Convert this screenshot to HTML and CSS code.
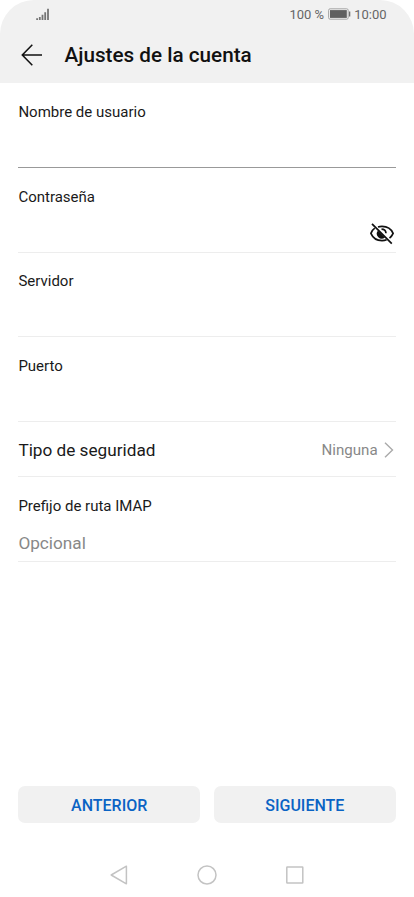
FILE: index.html
```html
<!DOCTYPE html>
<html lang="es">
<head>
<meta charset="utf-8">
<title>Ajustes de la cuenta</title>
<link rel="stylesheet" href="styles.css">
</head>
<body>
<div class="screen">
  <header class="header">
    <div class="status">
      <svg class="signal" width="14" height="14" viewBox="0 0 14 14" fill="#747474"><path d="M.2 10.300h1.800V12H.2zM2.900 8.900h1.800V12H2.900zM5.600 6.700h1.800V12H5.600zM8.300 4.200h1.800V12H8.300zM11.100.7h1.800V12h-1.800z"/></svg>
      <div class="status-right">
        <span>100 %</span>
        <svg width="23" height="12" viewBox="0 0 23 12"><rect x=".6" y=".8" width="19.6" height="10.4" rx="1.5" fill="#f1f1f1" stroke="#a5a5a5"/><rect x="2" y="2.1" width="16.8" height="7.8" fill="#606060"/><path d="M21 3.500h1.300v5H21z" fill="#707070"/></svg>
        <span>10:00</span>
      </div>
    </div>
    <div class="titlebar">
      <svg width="22" height="22" viewBox="0 0 22 22" fill="none" stroke="#111" stroke-width="1.55"><path d="M11.3.8 1.3 11l10 10.2M1.5 11H21"/></svg>
      <h1>Ajustes de la cuenta</h1>
    </div>
  </header>
  <main class="form">
    <div class="field active"><span class="label">Nombre de usuario</span></div>
    <div class="field"><span class="label">Contraseña</span>
      <svg class="eye" width="24" height="22" viewBox="0 0 24 22" fill="none" stroke="#111" stroke-width="1.7"><path d="M4.8 5.1C3.2 6.1 1.8 8 .9 10.4c2 4.7 6.200 7.200 11.100 7.200 1.700 0 3.200-.3 4.600-.9M8 4c1.200-.4 2.600-.6 4-.6 5 0 9.200 2.500 11.100 7-.8 1.900-2 3.500-3.600 4.700"/><path d="M8 7.600a4.900 4.900 0 0 0 6.900 6.900z" fill="#111" stroke="none"/><path d="M11.500 6.200c2.500 0 4.300 1.700 4.500 4"/><path d="M2 .8 21.800 20.600"/></svg>
    </div>
    <div class="field"><span class="label">Servidor</span></div>
    <div class="field"><span class="label">Puerto</span></div>
    <div class="row"><span class="row-name">Tipo de seguridad</span><span class="row-value">Ninguna</span>
      <svg width="10" height="18" viewBox="0 0 10 18" fill="none" stroke="#aaa" stroke-width="1.4"><path d="m1 1.700 7.500 7.300L1 16.300"/></svg>
    </div>
    <div class="field"><span class="label">Prefijo de ruta IMAP</span><span class="hint">Opcional</span></div>
  </main>
  <div class="actions"><button>ANTERIOR</button><button>SIGUIENTE</button></div>
  <nav class="nav">
    <svg width="20" height="20" viewBox="0 0 20 20"><path d="M17.400 1.200v17.600L2.200 10z"/></svg>
    <svg width="20" height="20" viewBox="0 0 20 20"><circle cx="10" cy="10" r="9"/></svg>
    <svg width="20" height="20" viewBox="0 0 20 20"><rect x="1.800" y="2.100" width="16" height="15.800" rx=".5"/></svg>
  </nav>
</div>
</body>
</html>
```
FILE: styles.css
```css
* { box-sizing: border-box; }
body { margin: 0; background: #fff; font-family: Roboto, sans-serif; color: #1a1a1a; }
svg { display: block; flex: none; }
.screen { width: 414px; height: 897px; display: flex; flex-direction: column; background: #fff; overflow: hidden; }
.header { height: 82.600px; background: #f1f1f1; border-radius: 34px 34px 0 0; }
.status { height: 28px; padding: 0 27.500px 0 36px; display: flex; align-items: center; justify-content: space-between; }
.signal { margin-top: 2px; }
.status-right { display: flex; align-items: center; gap: 3.500px; font-size: 13px; line-height: 28px; color: #666; }
.status-right span { position: relative; top: 1px; }
.titlebar { height: 54px; padding-left: 21px; display: flex; align-items: center; gap: 21.500px; }
h1 { margin: 0; font-size: 20.700px; line-height: 26px; font-weight: 500; color: #111; }
.form { padding: .8px 18.400px 0; }
.field { height: 84.600px; padding-top: 18.800px; position: relative; border-bottom: 1px solid #ededed; }
.field.active { border-bottom-color: #999; }
.label { display: block; font-size: 15px; line-height: 20px; }
.hint { display: block; margin-top: 15px; font-size: 17.200px; line-height: 24px; color: #888; }
.eye { position: absolute; right: 1.500px; top: 55.500px; }
.row { height: 55.600px; padding-top: 1px; display: flex; align-items: center; border-bottom: 1px solid #ededed; }
.row-name { flex: 1; font-size: 17.200px; }
.row-value { font-size: 15.100px; color: #888; margin-right: 6px; }
.row svg { margin-right: 2px; }
.actions { margin-top: auto; padding: 0 18.400px; display: flex; gap: 14px; }
button { flex: 1; height: 37px; border: 0; border-radius: 7px; padding: 1px 0 0; background: #f1f1f1; color: #0a63c4; font: 500 16px Roboto, sans-serif; }
.nav { margin: 42px 0 12px; display: flex; justify-content: center; gap: 68px; fill: none; stroke: #c3c3c3; stroke-width: 1.500; stroke-linejoin: round; }
```
